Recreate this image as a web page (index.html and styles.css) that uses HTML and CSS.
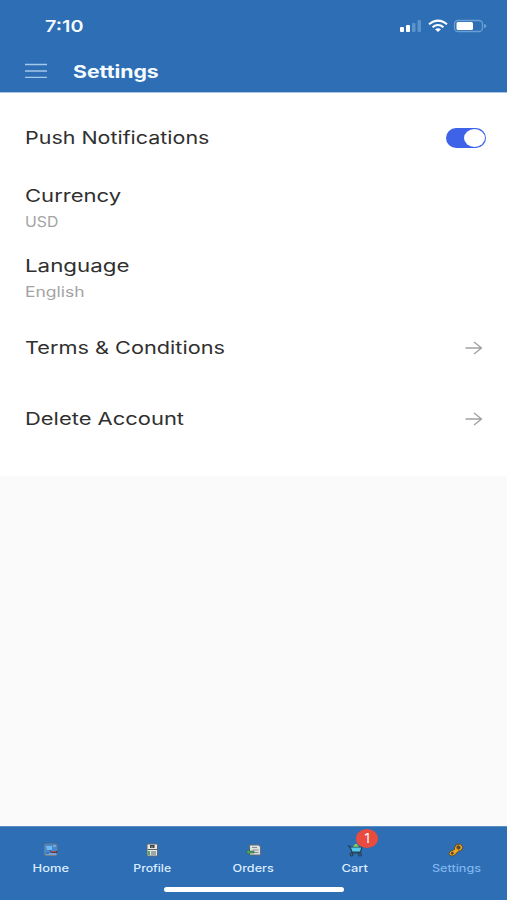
FILE: index.html
```html
<!DOCTYPE html>
<html lang="en">
<head>
<meta charset="utf-8">
<title>Settings</title>
<link rel="stylesheet" href="styles.css">
</head>
<body>
<div class="app">
  <header class="header">
    <div class="status">
      <span class="time wide">7:10</span>
      <svg class="indicators" width="88" height="16" viewBox="0 0 88 16">
        <g fill="#fff"><rect x="1" y="9" width="4" height="5" rx="1"/><rect x="7" y="7" width="4" height="7" rx="1"/></g>
        <g fill="#5b94cc"><rect x="13" y="5" width="3.500" height="9" rx="1"/><rect x="18.500" y="2" width="3.500" height="12" rx="1"/></g>
        <g fill="none" stroke="#fff" stroke-width="2"><path d="M30 6.200Q39-1 48 6.200"/><path d="M33.500 9.200Q39 4.800 44.500 9.200"/></g>
        <path fill="#fff" d="M36 11.300Q39 9 42 11.300L39 14Z"/>
        <rect x="55.500" y="2.500" width="28" height="11" rx="3.500" fill="none" stroke="#6b9fd3" stroke-width="1.300"/>
        <rect x="57.500" y="4" width="16.500" height="8" rx="1.500" fill="#fff"/>
        <path fill="#6b9fd3" d="M85 6Q87.500 6.500 87.500 8T85 10Z"/>
      </svg>
    </div>
    <div class="titlebar">
      <svg width="22" height="16" viewBox="0 0 22 16" stroke="#a5c7ea" stroke-width="1.300"><path d="M0 1.500H22M0 8H22M0 14.300H22"/></svg>
      <h1 class="title wide">Settings</h1>
    </div>
  </header>

  <main class="list">
    <div class="row push"><span class="label wide l-push">Push Notifications</span><span class="toggle"></span></div>
    <div class="row double"><span class="label wide l-currency">Currency</span><span class="value wide v-usd">USD</span></div>
    <div class="row double"><span class="label wide l-language">Language</span><span class="value wide v-english">English</span></div>
    <div class="row link"><span class="label wide l-terms">Terms &amp; Conditions</span>
      <svg class="arrow" width="18" height="14" viewBox="0 0 18 14"><path d="M.5 7H16.500M9 1L16.500 7L9 13"/></svg></div>
    <div class="row link"><span class="label wide l-delete">Delete Account</span>
      <svg class="arrow" width="18" height="14" viewBox="0 0 18 14"><path d="M.5 7H16.500M9 1L16.500 7L9 13"/></svg></div>
  </main>

  <nav class="tabs">
    <div class="tab">
      <svg width="16" height="14" viewBox="0 0 16 14"><rect x="1.500" y="1" width="12.500" height="11.500" rx="1.500" fill="#418bd5" stroke="#777b87"/><path d="M3 3H9V7H4Z" fill="#70b9f3"/><path d="M10 3H13M3 11H13" stroke="#aebccc"/><path d="M6 6.500L8 8H15L14 10H8Z" fill="#533c50"/><path d="M8 8.500H13" stroke="#b34b54"/><path d="M3 9H6V11H3Z" fill="#3076c4"/></svg>
      <span class="wide t-home">Home</span>
    </div>
    <div class="tab">
      <svg width="16" height="14" viewBox="0 0 16 14"><rect x="3" y="1" width="10.500" height="12" rx="1" fill="#e4e8e5" stroke="#5d6872"/><path d="M6 2H10.500V5H6Z" fill="#34434c"/><path d="M3.500 6.500H13M7 9H12M7 11H12" stroke="#5b6263"/><path d="M3.500 8H6V12H3.500Z" fill="#55a668"/><path d="M7 4H9" stroke="#cb9a75"/></svg>
      <span class="wide t-profile">Profile</span>
    </div>
    <div class="tab">
      <svg width="16" height="14" viewBox="0 0 16 14"><path d="M4.500 2H14L15.500 4V12H4.500Z" fill="#dce1df" stroke="#626d75"/><path d="M7 4.500H12M8 7H13.500M9 9.500H13.500" stroke="#858e91"/><path d="M1 9L4.500 6V8H9V10H4.500V12Z" fill="#4ca65c" stroke="#315d52" stroke-width=".6"/></svg>
      <span class="wide t-orders">Orders</span>
    </div>
    <div class="tab">
      <svg width="16" height="14" viewBox="0 0 16 14"><path d="M1 2.500L3 4H15L13.500 9H5L3 4" fill="#55cbed" stroke="#263e4d" stroke-width="1.200"/><path d="M6 4L7 1.500L10 1L12 4Z" fill="#62bd5a"/><path d="M9 1V3" stroke="#e6d967"/><path d="M4 10H13" stroke="#263e4d"/><g fill="#416b85" stroke="#213342"><circle cx="4.500" cy="11.500" r="1.500"/><circle cx="13" cy="11.500" r="1.500"/></g></svg>
      <span class="badge">1</span>
      <span class="wide t-cart">Cart</span>
    </div>
    <div class="tab active">
      <svg width="16" height="14" viewBox="0 0 16 14"><g fill="#eda526" stroke="#5b4828" stroke-width=".9"><path d="M8 1L10 1.500L12.500 .8L13.500 2.500L15 4L14 6L13 8L11 7.800L9.500 9L8 11L6.500 12L4.500 13L2 12.500L1 10.500L2 8.500L4 7.500L6.500 6.500L6.500 4L8 3Z"/><circle cx="10.500" cy="4.500" r="1.700" fill="#594a34"/><circle cx="4.300" cy="10.200" r="1.100" fill="#594a34"/></g></svg>
      <span class="wide t-settings">Settings</span>
    </div>
    <div class="home-bar"></div>
  </nav>
</div>
</body>
</html>
```

FILE: styles.css
```css
* { box-sizing: border-box; }
body { margin: 0; font-family: Inter, "Liberation Sans", sans-serif; }
.app { width: 507px; height: 900px; display: flex; flex-direction: column; background: #fafafa; }
.wide { display: inline-block; white-space: nowrap; transform-origin: left center; transform: scaleX(var(--w, 1.2)); }

.header { height: 93px; background: #2d6eb5; color: #f5faff; border-bottom: 1px solid #a9c5e3; }
.status { height: 51px; padding: 0 20px 0 45px; display: flex; justify-content: space-between; align-items: center; }
.time { font-size: 16.500px; font-weight: 600; line-height: 20px; }
.titlebar { height: 40px; padding-left: 25px; display: flex; align-items: center; gap: 26px; }
.title { --w: 1.215; margin: 1px 0 0; font-size: 17.500px; font-weight: 700; line-height: 24px; }

.list { height: 383px; background: #fff; padding: 9px 20px 0 25px; }
.row { display: flex; align-items: center; justify-content: space-between; }
.push { height: 72px; }
.double { height: 70px; flex-direction: column; align-items: flex-start; justify-content: flex-start; padding-top: 10px; }
.link { height: 71px; padding-right: 4px; }
.double + .link { margin-top: -2px; }
.label { font-size: 17.500px; line-height: 24px; color: #303030; }
.value { font-size: 14px; line-height: 20px; margin-top: 4px; color: #a3a3a3; }
.l-push { --w: 1.226; }
.l-currency { --w: 1.26; }
.l-language { --w: 1.275; }
.l-terms { --w: 1.24; }
.l-delete { --w: 1.253; }
.v-usd { --w: 1.13; }
.v-english { --w: 1.25; }
.toggle { width: 40px; height: 20px; margin-right: 1px; border-radius: 10px; background: #3e62e8; padding: 1px; display: flex; justify-content: flex-end; }
.toggle::after { content: ""; width: 21px; height: 18px; border-radius: 50%; background: #fff; }
.arrow { fill: none; stroke: #a0a0a0; stroke-width: 1.3; }

.tabs { position: relative; height: 74px; margin-top: auto; display: grid; grid-template-columns: repeat(5, 1fr); background: #2d6eb5; border-top: 1px solid #5a8dc4; }
.tab { position: relative; display: flex; flex-direction: column; align-items: center; padding-top: 16px; color: #dcecff; font-size: 10.500px; line-height: 14px; font-weight: 500; }
.tab .wide { margin-top: 5px; transform-origin: center; }
.t-home { --w: 1.23; }
.t-profile { --w: 1.17; }
.t-cart { --w: 1.23; }
.active { color: #7fb5ee; }
.badge { position: absolute; left: 52px; top: 2px; width: 22px; height: 19px; border-radius: 50%; background: #e94b40; color: #fff; font-size: 13px; font-weight: 400; line-height: 19px; text-align: center; }
.home-bar { position: absolute; left: 164px; bottom: 8px; width: 180px; height: 5px; border-radius: 3px; background: #fff; }
```
